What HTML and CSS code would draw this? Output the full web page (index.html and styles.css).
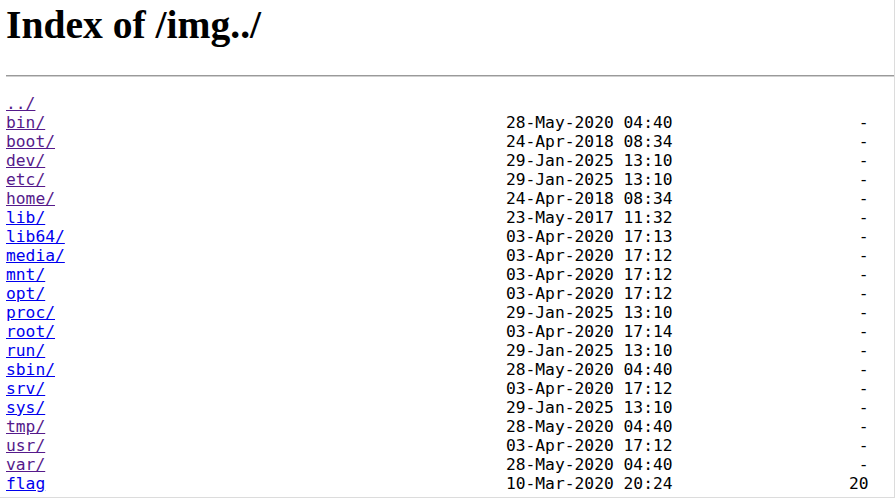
FILE: index.html
```html
<!DOCTYPE html>
<html>
<head>
<meta charset="utf-8">
<title>Index of /img../</title>
<link rel="stylesheet" href="styles.css">
</head>
<body>
<div class="frame">
  <h1 class="title">Index of /img../</h1>
  <hr class="rule">
  <div class="listing">
    <div class="row"><a class="visited" href="#">../</a></div>
    <div class="row"><span><a class="visited" href="#">bin/</a></span><span>28-May-2020 04:40</span><span class="size">-</span></div>
    <div class="row"><span><a class="visited" href="#">boot/</a></span><span>24-Apr-2018 08:34</span><span class="size">-</span></div>
    <div class="row"><span><a class="visited" href="#">dev/</a></span><span>29-Jan-2025 13:10</span><span class="size">-</span></div>
    <div class="row"><span><a class="visited" href="#">etc/</a></span><span>29-Jan-2025 13:10</span><span class="size">-</span></div>
    <div class="row"><span><a class="visited" href="#">home/</a></span><span>24-Apr-2018 08:34</span><span class="size">-</span></div>
    <div class="row"><span><a href="#">lib/</a></span><span>23-May-2017 11:32</span><span class="size">-</span></div>
    <div class="row"><span><a href="#">lib64/</a></span><span>03-Apr-2020 17:13</span><span class="size">-</span></div>
    <div class="row"><span><a href="#">media/</a></span><span>03-Apr-2020 17:12</span><span class="size">-</span></div>
    <div class="row"><span><a href="#">mnt/</a></span><span>03-Apr-2020 17:12</span><span class="size">-</span></div>
    <div class="row"><span><a href="#">opt/</a></span><span>03-Apr-2020 17:12</span><span class="size">-</span></div>
    <div class="row"><span><a href="#">proc/</a></span><span>29-Jan-2025 13:10</span><span class="size">-</span></div>
    <div class="row"><span><a href="#">root/</a></span><span>03-Apr-2020 17:14</span><span class="size">-</span></div>
    <div class="row"><span><a href="#">run/</a></span><span>29-Jan-2025 13:10</span><span class="size">-</span></div>
    <div class="row"><span><a href="#">sbin/</a></span><span>28-May-2020 04:40</span><span class="size">-</span></div>
    <div class="row"><span><a href="#">srv/</a></span><span>03-Apr-2020 17:12</span><span class="size">-</span></div>
    <div class="row"><span><a href="#">sys/</a></span><span>29-Jan-2025 13:10</span><span class="size">-</span></div>
    <div class="row"><span><a class="visited" href="#">tmp/</a></span><span>28-May-2020 04:40</span><span class="size">-</span></div>
    <div class="row"><span><a class="visited" href="#">usr/</a></span><span>03-Apr-2020 17:12</span><span class="size">-</span></div>
    <div class="row"><span><a class="visited" href="#">var/</a></span><span>28-May-2020 04:40</span><span class="size">-</span></div>
    <div class="row"><span><a href="#">flag</a></span><span>10-Mar-2020 20:24</span><span class="size">20</span></div>
  </div>
  <hr class="rule">
</div>
</body>
</html>
```
FILE: styles.css
```css
html, body {
  margin: 0;
  padding: 0;
  background: #ffffff;
}

.frame {
  width: 888px;
  height: 497px;
  padding-left: 6px;
  overflow: hidden;
  border-right: 1px solid #dcdcdc;
  border-bottom: 1px solid #dcdcdc;
  color: #000000;
}

.title {
  margin: 2px 0 0 0;
  font-family: "Liberation Serif", serif;
  font-weight: bold;
  font-size: 39.6px;
  line-height: 46px;
}

.rule {
  margin: 27px 0 0 0;
  height: 0;
  border: 0;
  border-top: 1px solid #9a9a9a;
  border-bottom: 1px solid #d0d0d0;
}

.listing {
  margin-top: 17px;
  font-family: "DejaVu Sans Mono", monospace;
  font-size: 16.3px;
  line-height: 19px;
}

.row {
  display: grid;
  grid-template-columns: 51ch 17ch 20ch;
  height: 19px;
  white-space: nowrap;
}

.size {
  text-align: right;
}

.listing a {
  color: #0000ee;
  text-decoration: underline;
}

.listing a.visited {
  color: #551a8b;
}
```
